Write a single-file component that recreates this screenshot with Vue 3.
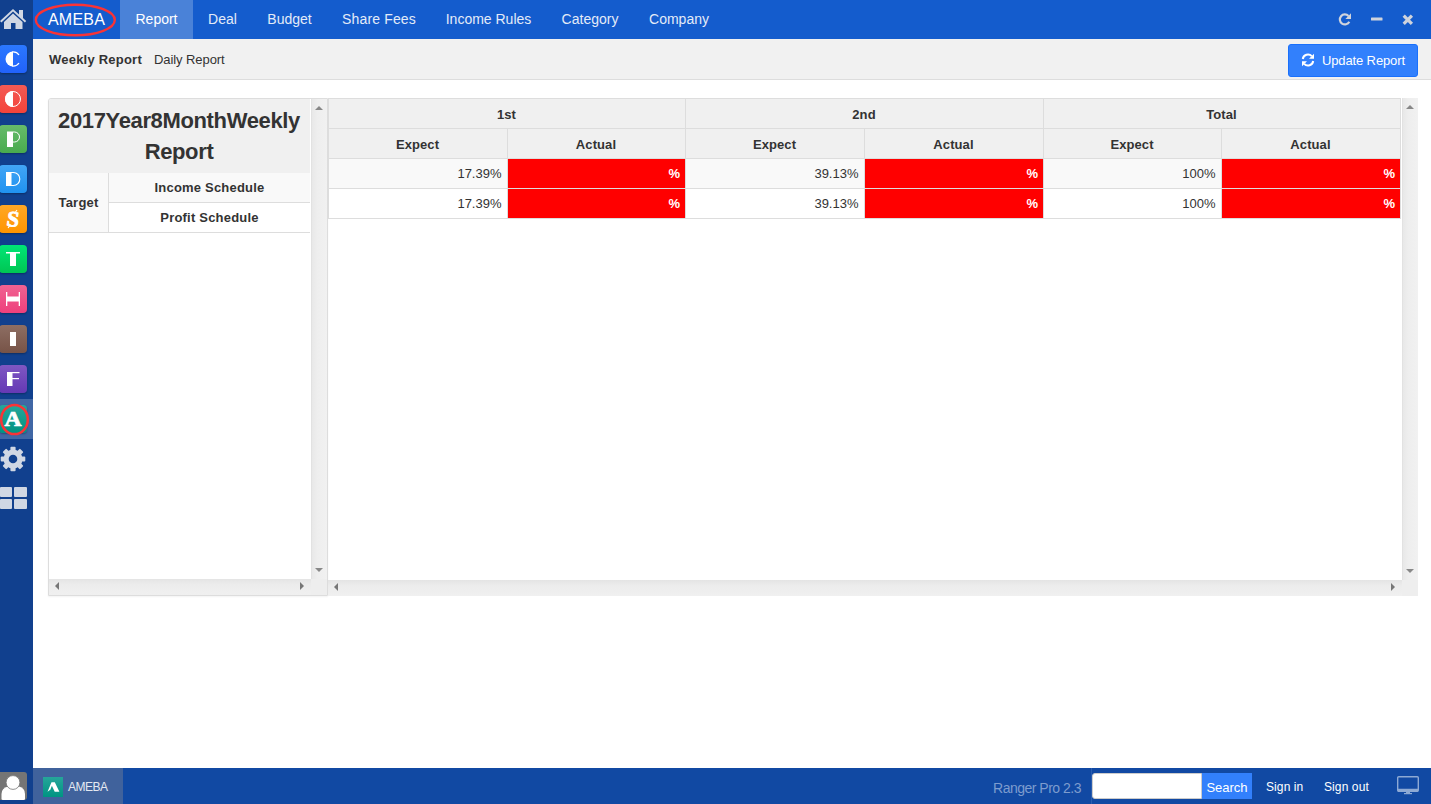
<script setup>
const apps = [
  { id: 'c', top: '#2b78ff', bottom: '#2162fb' },
  { id: 'o', top: '#f35a54', bottom: '#f4433a' },
  { id: 'p', top: '#66bb6a', bottom: '#49ab4e' },
  { id: 'd', top: '#42a5f5', bottom: '#2092f0' },
  { id: 's', top: '#ffa726', bottom: '#ff9500' },
  { id: 't', top: '#00e676', bottom: '#00c653' },
  { id: 'h', top: '#f06292', bottom: '#ee407c' },
  { id: 'i', top: '#8d6e63', bottom: '#775347' },
  { id: 'f', top: '#7e57c2', bottom: '#6539b4' },
  { id: 'a', top: '#26a69a', bottom: '#009482', active: true },
]
const menu = [
  { name: 'Report', cls: 'w-report active' },
  { name: 'Deal', cls: 'w-deal' },
  { name: 'Budget', cls: 'w-budget' },
  { name: 'Share Fees', cls: 'w-share' },
  { name: 'Income Rules', cls: 'w-income' },
  { name: 'Category', cls: 'w-category' },
  { name: 'Company', cls: 'w-company' },
]
const groups = ['1st', '2nd', 'Total']
const rows = [
  ['17.39%', '39.13%', '100%'],
  ['17.39%', '39.13%', '100%'],
]
</script>

<template>
  <div class="desk">
    <aside class="side">
      <div class="slot home">
        <svg width="28" height="22" viewBox="0 0 28 22"><path d="M13 1 19 6.400V2h4v8l3.200 3-1.300 1.400L13 3.600 1.400 14.400 0 13z" fill="#d0d7e4"/><path d="M13 5.400 22.500 14V21H15.500V15H11V21H4V14z" fill="#d0d7e4"/></svg>
      </div>
      <div v-for="a in apps" :key="a.id" class="slot" :class="{ on: a.active }">
        <div class="tile" :style="{ background: `linear-gradient(${a.top}, ${a.bottom})` }">
          <svg width="28" height="28" viewBox="0 0 28 28" fill="#fff">
            <g v-if="a.id === 'c'">
              <path d="M14 6.500a7.500 7.500 0 0 0 0 15z"/>
              <path d="M13 7c3.500-.4 5.500.7 7 3M13 21c3.500.4 5.500-.7 7-3" fill="none" stroke="#fff" stroke-width="1.200"/>
            </g>
            <g v-else-if="a.id === 'o'">
              <path d="M14 6a8 8 0 0 0 0 16z"/>
              <circle cx="14" cy="14" r="7.500" fill="none" stroke="#fff" stroke-width="1"/>
            </g>
            <g v-else-if="a.id === 'p'">
              <rect x="8" y="6.500" width="6" height="15.500"/>
              <path d="M14 7h1.500a5 5 0 0 1 0 10H14" fill="none" stroke="#fff" stroke-width="1"/>
            </g>
            <g v-else-if="a.id === 'd'">
              <rect x="7" y="7" width="5.500" height="14"/>
              <path d="M12 7.500h2.500a6.300 6.500 0 0 1 0 13H12" fill="none" stroke="#fff" stroke-width="1.100"/>
            </g>
            <g v-else-if="a.id === 's'">
              <text class="glyph" font-size="22" transform="translate(14 21.300) rotate(8 0 -7)" stroke="#fff" stroke-width=".9">S</text>
              <path d="M18 5l-2.500 3.500M11.500 19.500l-2.500 3.500" stroke="#fff" stroke-width="1.100"/>
            </g>
            <g v-else-if="a.id === 't'">
              <rect x="7" y="7" width="14" height="1.500"/><rect x="11" y="8" width="6" height="13"/>
            </g>
            <g v-else-if="a.id === 'h'">
              <rect x="7" y="7" width="1.300" height="14"/><rect x="8" y="11.500" width="12" height="5"/><rect x="19.700" y="7" width="1.300" height="14"/>
            </g>
            <rect v-else-if="a.id === 'i'" x="11" y="7" width="6" height="14"/>
            <g v-else-if="a.id === 'f'">
              <rect x="8" y="7" width="5.500" height="14"/><rect x="13" y="7" width="7.500" height="1.200"/><rect x="13" y="13" width="7" height="1.200"/>
            </g>
            <text v-else class="glyph" font-size="20" transform="translate(14 21) scale(1.18 1)" stroke="#fff" stroke-width=".7">A</text>
          </svg>
        </div>
        <svg v-if="a.active" class="ring" width="30" height="34" viewBox="0 0 30 34"><ellipse cx="14.500" cy="16.500" rx="13.300" ry="14.600" fill="none" stroke="#fa3336" stroke-width="2.500"/></svg>
      </div>
      <div class="slot">
        <svg width="26" height="26" viewBox="-13 -13 26 26"><g fill="#d0d7e4"><rect v-for="n in 4" :key="n" x="-2.600" y="-12.300" width="5.200" height="24.600" rx="1" :transform="`rotate(${n * 45})`"/></g><circle r="9.500" fill="#d0d7e4"/><circle r="4.300" fill="#11408e"/></svg>
      </div>
      <div class="slot blocks">
        <i></i><i></i><i></i><i></i>
      </div>
      <div class="avatar">
        <svg width="28" height="28" viewBox="0 0 28 28"><rect x="-2" width="30" height="28" rx="3" fill="#757575"/><path d="M2.500 27v-5q0-6 6.500-7.500h11Q26 16 26 22v5q0 1-1.500 1H4Q2.500 28 2.500 27z" fill="#fff"/><circle cx="14" cy="10.500" r="6.900" fill="#fff" stroke="#757575" stroke-width=".8"/></svg>
      </div>
    </aside>

    <section class="main">
      <header class="top">
        <div class="brand">AMEBA
          <svg class="brand-ring" width="84" height="36" viewBox="0 0 84 36"><ellipse cx="42.300" cy="18" rx="39.500" ry="15.300" fill="none" stroke="#fa3336" stroke-width="2.400"/></svg>
        </div>
        <nav><a v-for="m in menu" :key="m.name" :class="m.cls">{{ m.name }}</a></nav>
        <div class="win">
          <svg width="14" height="14" viewBox="0 0 14 14"><path d="M11.300 8.700A5 5 0 1 1 10.500 3" fill="none" stroke="#cfd3dc" stroke-width="2.200"/><path d="M13 .3V5.900H7.400z" fill="#cfd3dc"/></svg>
          <svg width="12" height="14" viewBox="0 0 12 14"><rect x="0" y="4.500" width="11.500" height="3" rx=".6" fill="#cfd3dc"/></svg>
          <svg width="12" height="14" viewBox="0 0 12 14"><path d="M1.700 2.700 9.900 10.900M9.900 2.700 1.700 10.900" stroke="#cfd3dc" stroke-width="3.200"/></svg>
        </div>
      </header>

      <div class="sub">
        <b>Weekly Report</b><span>Daily Report</span>
        <button class="update">
          <svg width="14" height="14" viewBox="0 0 14 14"><path d="M1.800 6A5.200 5.200 0 0 1 10.800 3.200M12.200 8A5.200 5.200 0 0 1 3.200 10.800" fill="none" stroke="#fff" stroke-width="2"/><path d="M13 .8V5.800H8zM1 13.200V8.200H6z" fill="#fff"/></svg>
          <em>Update Report</em>
        </button>
      </div>

      <div class="work">
        <div class="left">
          <div class="left-view">
            <h2>2017Year8MonthWeekly<br>Report</h2>
            <div class="target">
              <div class="t-name">Target</div>
              <div class="t-list"><div>Income Schedule</div><div>Profit Schedule</div></div>
            </div>
          </div>
          <div class="vbar"><i class="up"></i><i class="down"></i></div>
          <div class="hbar"><i class="prev"></i><i class="next"></i></div>
          <div class="corner"></div>
        </div>

        <div class="right">
          <div class="right-view">
            <div class="grid">
              <div v-for="g in groups" :key="g" class="cell head group">{{ g }}</div>
              <template v-for="g in groups" :key="g + 'h'">
                <div class="cell head">Expect</div><div class="cell head">Actual</div>
              </template>
              <template v-for="(r, i) in rows" :key="i">
                <template v-for="(v, j) in r" :key="j">
                  <div class="cell num" :class="{ odd: i === 0 }">{{ v }}</div><div class="cell num bad">%</div>
                </template>
              </template>
            </div>
          </div>
          <div class="vbar"><i class="up"></i><i class="down"></i></div>
          <div class="hbar"><i class="prev"></i><i class="next"></i></div>
          <div class="corner"></div>
        </div>
      </div>

      <footer class="task">
        <div class="task-item">
          <div class="mini"><svg width="20" height="20" viewBox="0 0 20 20"><path d="M8.500 5.200h3.300l4.600 9.600h-4.700L8.900 8.800 7.300 12.800l-2.800 2z" fill="#fff"/></svg></div>
          <span>AMEBA</span>
        </div>
        <div class="ver">Ranger Pro 2.3</div>
        <div class="search"><input type="text"><button>Search</button></div>
        <a class="in">Sign in</a><a class="out">Sign out</a>
        <svg class="screen" width="22" height="20" viewBox="0 0 22 20"><rect x=".7" y=".7" width="20.600" height="14.600" rx="1" fill="none" stroke="#8da9d4" stroke-width="1.400"/><path d="M1 12.800h20V15.500H1zM9 16h4v1h2v1.300H7V17h2z" fill="#8da9d4"/></svg>
      </footer>
    </section>
  </div>
</template>

<style>
body { margin: 0; background: #fff; overflow: hidden; }
</style>

<style scoped>
* { box-sizing: border-box; }
.desk { display: flex; width: 1431px; height: 804px; overflow: hidden; font-family: "Liberation Sans", Arial, sans-serif; font-size: 13px; color: #333; background: #fff; }
svg { display: block; }
.side { width: 33px; height: 804px; background: #11408e; display: flex; flex-direction: column; flex: none; }
.slot { height: 40px; width: 33px; display: flex; align-items: center; flex: none; position: relative; }
.slot.home { height: 39px; padding-bottom: 2px; }
.on { background: #4067a5; }
.tile { width: 28px; height: 28px; margin-left: -1px; border-radius: 4px; box-shadow: 0 1px 2px rgba(0,0,0,.3); flex: none; }
.glyph { font-family: "Liberation Serif", serif; font-weight: bold; text-anchor: middle; }
.ring { position: absolute; left: 0; top: 4px; }
.slot.blocks { display: grid; grid-template-columns: 12px 13px; grid-template-rows: 10px 10px; gap: 2px; align-content: center; align-items: stretch; height: 38px; }
.blocks i { background: #d0d7e4; border-radius: 1px; }
.avatar { margin-top: auto; height: 32px; margin-left: -1px; overflow: hidden; }
.main { flex: 1; display: flex; flex-direction: column; }
.top { height: 39px; background: #145ccd; display: flex; color: #fff; }
.brand { width: 87px; padding-left: 15px; line-height: 39px; font-size: 16px; position: relative; letter-spacing: .2px; }
.brand-ring { position: absolute; left: 0; top: 2px; }
nav { display: flex; font-size: 14px; line-height: 38px; text-align: center; color: #e3ebf8; }
nav .active { background: #4a82d8; color: #fff; }
.w-report { width: 73px; } .w-deal { width: 59px; } .w-budget { width: 75px; } .w-share { width: 104px; letter-spacing: .15px; }
.w-income { width: 115px; } .w-category { width: 88px; } .w-company { width: 90px; }
.win { margin-left: auto; display: flex; align-items: center; gap: 19px; padding-right: 17px; }
.sub { height: 41px; background: #f1f1f1; border-bottom: 1px solid #ddd; display: flex; align-items: center; padding: 0 13px 0 16px; }
.sub b { width: 105px; letter-spacing: .22px; }
.sub span { letter-spacing: -.08px; }
.update { margin-left: auto; margin-top: 2px; width: 130px; height: 33px; border: 1px solid #1970fc; border-radius: 3px; background: #3280fc; color: #fff; display: flex; align-items: center; padding: 0 0 0 12px; gap: 7px; font: 13px "Liberation Sans", Arial, sans-serif; }
.update em { font-style: normal; letter-spacing: -.13px; white-space: nowrap; }
.work { flex: 1; display: flex; padding: 18px 13px 0 15px; }
.left { width: 280px; height: 498px; border: 1px solid #ddd; border-radius: 3px 0 0 0; display: grid; grid-template-columns: 262px 16px; grid-template-rows: 480px 16px; box-shadow: 0 1px 2px rgba(0,0,0,.05); overflow: hidden; }
.left-view { padding-right: 1px; }
h2 { margin: 0; height: 74px; background: #f0f0f0; text-align: center; font-size: 22px; line-height: 31px; padding: 6px 1px 0 0; letter-spacing: -.36px; }
.target { display: flex; height: 60px; border-bottom: 1px solid #ddd; font-weight: bold; text-align: center; letter-spacing: .2px; }
.t-name { width: 60px; border-right: 1px solid #ddd; background: #f9f9f9; line-height: 59px; }
.t-list { flex: 1; }
.t-list div { height: 30px; line-height: 29px; }
.t-list div:first-child { background: #f9f9f9; border-bottom: 1px solid #ddd; }
.vbar { background: linear-gradient(90deg, #e8e8e8, #eee 35%, #f1f1f1); border-left: 1px solid #e2e2e2; display: flex; flex-direction: column; justify-content: space-between; align-items: center; padding: 7px 1px 7px 0; }
.hbar { background: linear-gradient(#e4e4e4, #ececec 35%, #f0f0f0); display: flex; justify-content: space-between; align-items: center; padding: 0 7px 2px 6px; }
.vbar i, .hbar i { width: 0; height: 0; border: 4px solid transparent; }
.vbar .up { border-top: 0; border-bottom-color: #888; }
.vbar .down { border-bottom: 0; border-top-color: #888; }
.hbar .prev { border-left: 0; border-right-color: #777; }
.hbar .next { border-right: 0; border-left-color: #777; }
.corner { background: #eee; }
.right { width: 1090px; height: 498px; display: grid; grid-template-columns: 1074px 16px; grid-template-rows: 482px 16px; }
.grid { width: 1073px; display: grid; grid-template-columns: 179px 178px 179px 179px 178px 179px; grid-auto-rows: 30px; border-top: 1px solid #ddd; border-left: 1px solid #ddd; }
.cell { border-right: 1px solid #ddd; border-bottom: 1px solid #ddd; line-height: 29px; }
.head { background: #f0f0f0; font-weight: bold; text-align: center; letter-spacing: .1px; line-height: 31px; padding-right: 1px; }
.group { grid-column: span 2; }
.num { text-align: right; padding-right: 5.500px; }
.odd { background: #f9f9f9; }
.bad { background: #f00; color: #fff; font-weight: bold; padding-right: 5px; }
.task { height: 36px; background: #1149a3; display: flex; align-items: center; color: #fff; }
.task-item { width: 90px; height: 36px; background: #40629c; display: flex; align-items: center; padding: 2px 0 0 10px; gap: 5px; font-size: 12px; color: #e4e9f2; letter-spacing: -.5px; }
.mini { width: 20px; height: 20px; background: linear-gradient(#26a69a, #009482); }
.ver { margin-left: auto; font-size: 14px; color: #7d9cce; padding: 4px 10px 0 0; letter-spacing: -.5px; white-space: nowrap; }
.search { display: flex; height: 36px; border-left: 1px solid #2a5db0; align-items: center; }
.search input { width: 110px; height: 26px; border: 1px solid #ccc; border-radius: 3px 0 0 3px; background: #fff; padding: 0; }
.search button { width: 50px; height: 26px; border: 0; background: #3280fc; color: #fff; padding: 2px 0 0; font: 13px "Liberation Sans", Arial, sans-serif; }
.in, .out { font-size: 12px; letter-spacing: .1px; white-space: nowrap; padding-top: 2px; }
.in { width: 58px; margin-left: 14px; }
.out { width: 73px; }
.screen { margin-right: 12px; margin-top: -1px; }
</style>
